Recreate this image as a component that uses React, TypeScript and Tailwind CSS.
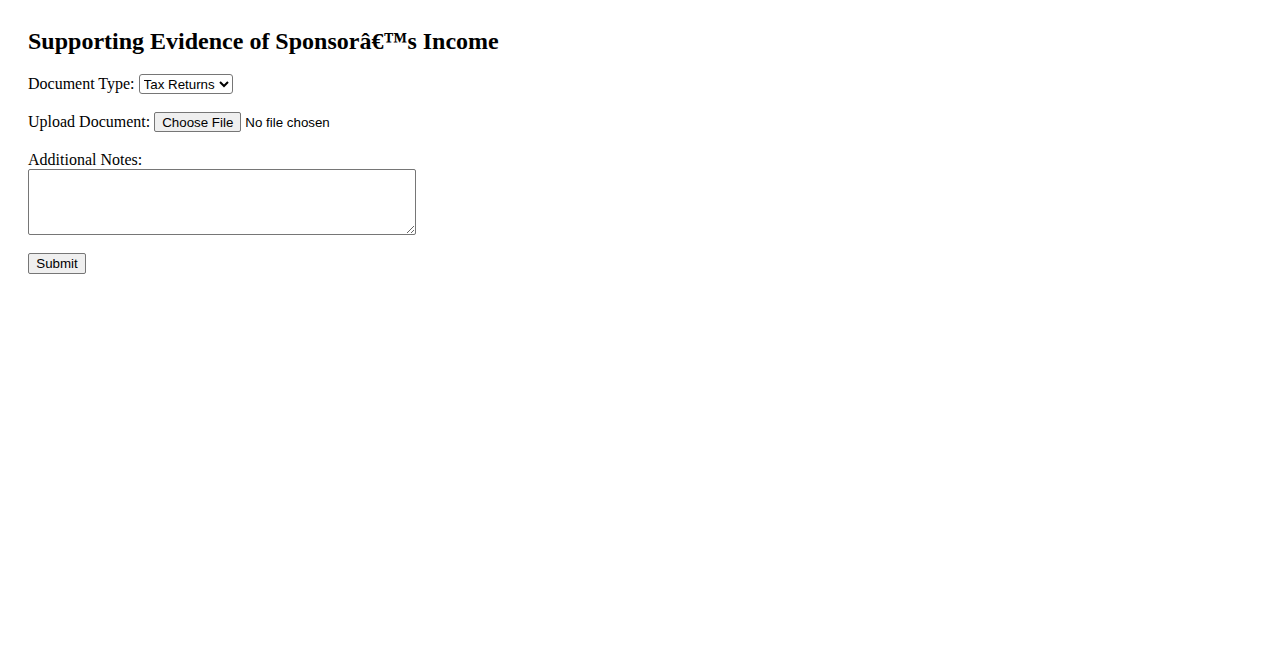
import React from 'react';

export default function App() {
  return (
    <div className="min-h-screen bg-white text-black font-['Liberation_Serif','Times_New_Roman',serif] text-[16px] px-[28px] pt-[27px]">
      <h2 className="text-[24px] font-bold leading-[28px]">Supporting Evidence of Sponsorâ€™s Income</h2>

      <form className="mt-[18px]" onSubmit={(e) => e.preventDefault()}>
        <div className="flex items-center h-[22px] gap-[4px]">
          <label htmlFor="docType">Document Type:</label>
          <select
            id="docType"
            className="h-[20px] w-[94px] border border-[#767676] rounded-[3px] bg-white font-['Liberation_Sans',Arial,sans-serif] text-[13.333px] text-black"
          >
            <option>Tax Returns</option>
            <option>Pay Stubs</option>
            <option>Bank Statements</option>
            <option>Employment Letter</option>
          </select>
        </div>

        <div className="flex items-center h-[22px] gap-[4px] mt-[16px]">
          <label htmlFor="upload">Upload Document:</label>
          <input
            id="upload"
            type="file"
            className="font-['Liberation_Sans',Arial,sans-serif] text-[13.333px] text-black file:h-[20px] file:px-[7px] file:mr-[4px] file:border file:border-[#767676] file:rounded-[2px] file:bg-[#efefef] file:text-black file:font-['Liberation_Sans',Arial,sans-serif] file:text-[13.333px]"
          />
        </div>

        <div className="mt-[18px]">
          <label htmlFor="notes" className="block leading-[18px]">Additional Notes:</label>
          <textarea
            id="notes"
            className="block w-[388px] h-[66px] border border-[#767676] rounded-[2px] bg-white font-['Liberation_Mono',monospace] text-[13.333px]"
          />
        </div>

        <button
          type="submit"
          className="mt-[18px] h-[21px] w-[58px] border border-[#767676] rounded-[2px] bg-[#efefef] font-['Liberation_Sans',Arial,sans-serif] text-[13.333px] text-black leading-none"
        >
          Submit
        </button>
      </form>
    </div>
  );
}
